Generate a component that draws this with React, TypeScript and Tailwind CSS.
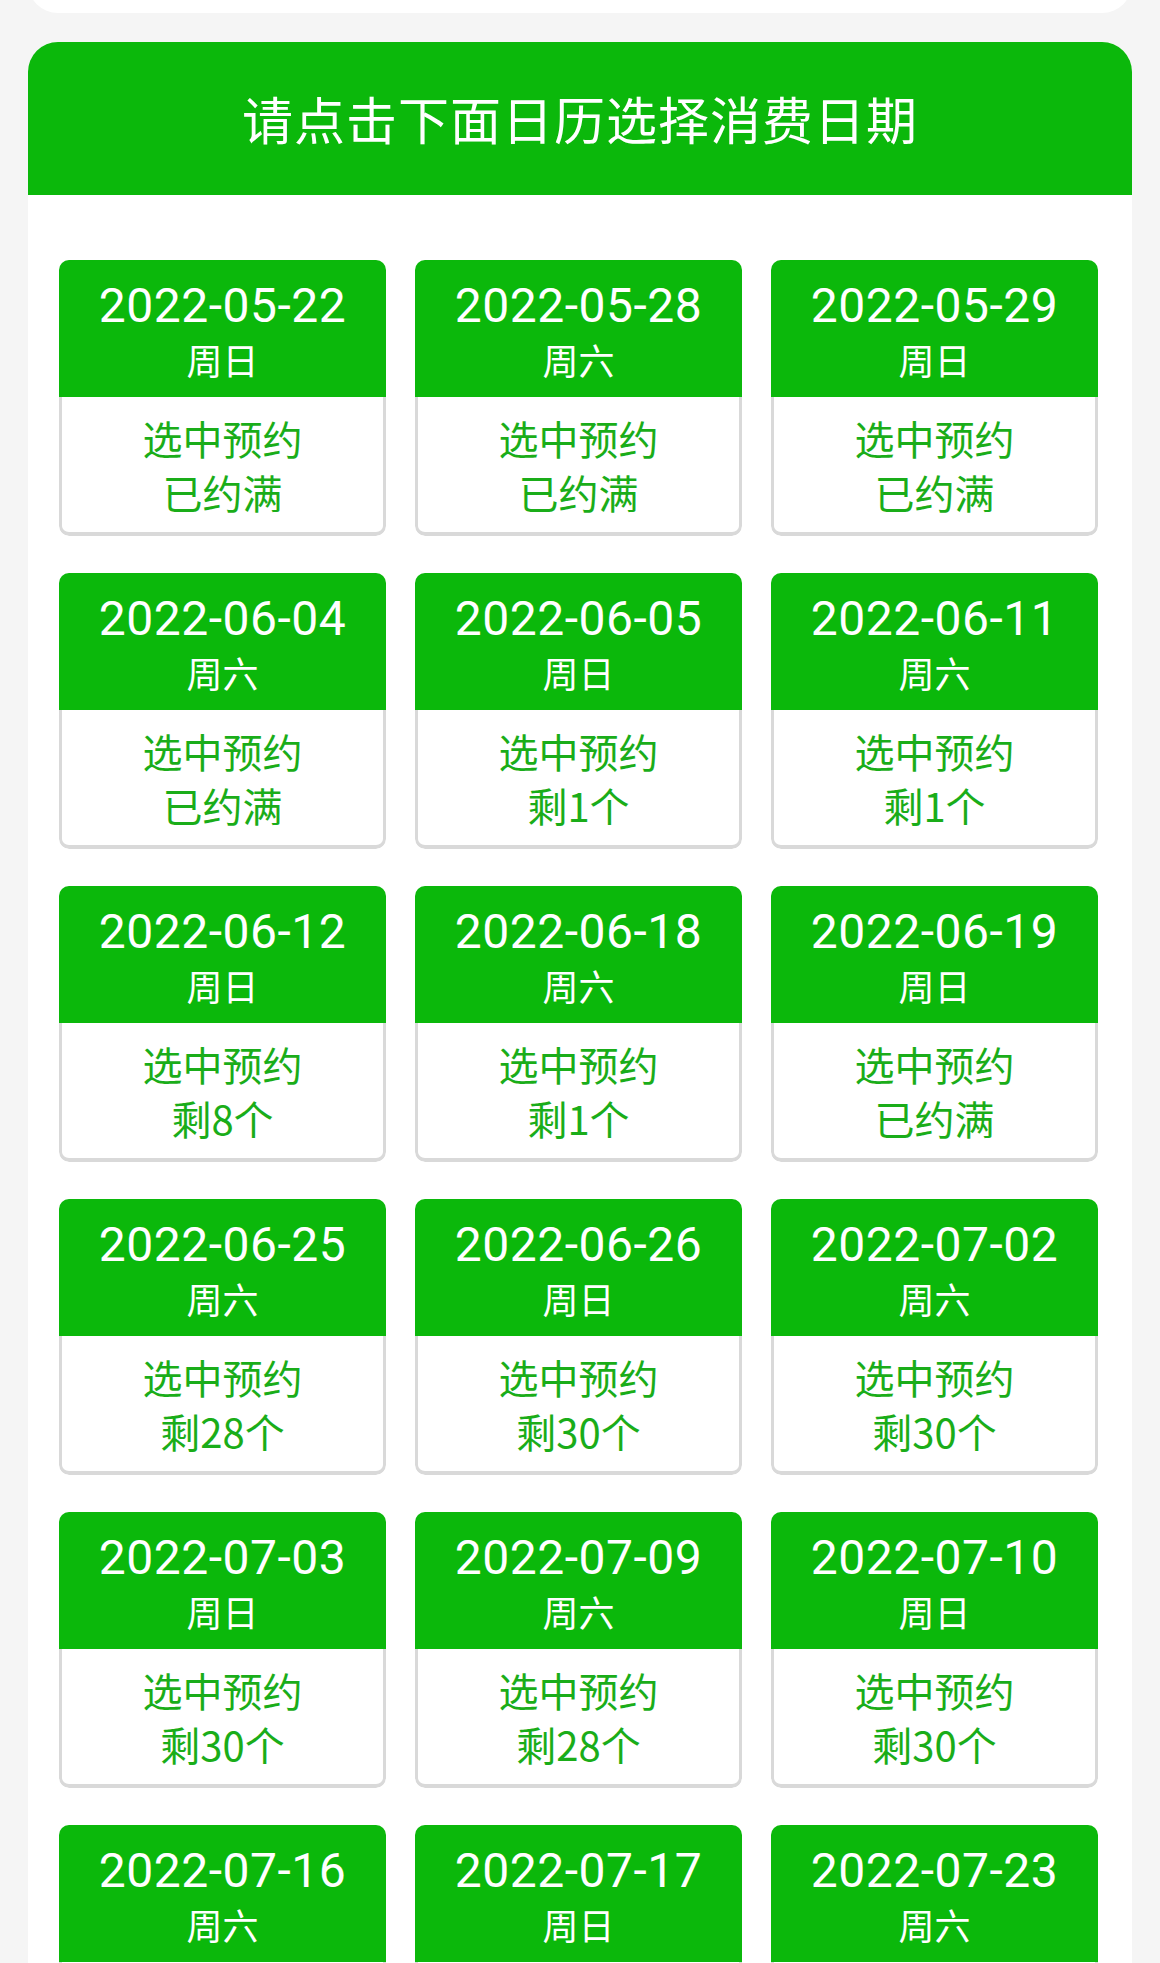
const DAYS = [
  { date: '2022-05-22', week: '周日', left: '已约满' },
  { date: '2022-05-28', week: '周六', left: '已约满' },
  { date: '2022-05-29', week: '周日', left: '已约满' },
  { date: '2022-06-04', week: '周六', left: '已约满' },
  { date: '2022-06-05', week: '周日', left: '剩1个' },
  { date: '2022-06-11', week: '周六', left: '剩1个' },
  { date: '2022-06-12', week: '周日', left: '剩8个' },
  { date: '2022-06-18', week: '周六', left: '剩1个' },
  { date: '2022-06-19', week: '周日', left: '已约满' },
  { date: '2022-06-25', week: '周六', left: '剩28个' },
  { date: '2022-06-26', week: '周日', left: '剩30个' },
  { date: '2022-07-02', week: '周六', left: '剩30个' },
  { date: '2022-07-03', week: '周日', left: '剩30个' },
  { date: '2022-07-09', week: '周六', left: '剩28个' },
  { date: '2022-07-10', week: '周日', left: '剩30个' },
  { date: '2022-07-16', week: '周六', left: '剩30个' },
  { date: '2022-07-17', week: '周日', left: '剩30个' },
  { date: '2022-07-23', week: '周六', left: '剩30个' },
]

function DayCard({ date, week, left }: { date: string; week: string; left: string }) {
  return (
    <div className="flex h-[276px] flex-col overflow-hidden rounded-[10px]">
      <div className="flex h-[137px] flex-col items-center bg-[#0bb80b] pt-[20px] text-white">
        <div className="font-['Roboto','Noto_Sans_CJK_SC',sans-serif] text-[48px] leading-[52px] tracking-[0.5px]">
          {date}
        </div>
        <div className="text-[36px] leading-[54px]">{week}</div>
      </div>
      <div className="flex h-[139px] flex-col items-center rounded-b-[10px] border-x-[3px] border-b-[4px] border-[#d9d9d9] bg-white pt-[14px] text-[40px] leading-[54px] text-[#1aad19]">
        <div>选中预约</div>
        <div>{left}</div>
      </div>
    </div>
  )
}

export default function App() {
  return (
    <div className="min-h-[1963px] overflow-hidden bg-[#f5f5f5] font-['Noto_Sans_CJK_SC','Noto_Sans',sans-serif]">
      {/* previous card, mostly scrolled off */}
      <div className="mx-[28px] -mt-[47px] h-[60px] rounded-b-[30px] bg-white" />

      <div className="mx-[28px] mt-[29px] min-h-[1921px] rounded-t-[30px] bg-white">
        <div className="flex h-[153px] items-center justify-center rounded-t-[30px] bg-[#0bb80b] text-[51px] tracking-[1px] text-white">
          请点击下面日历选择消费日期
        </div>

        <div className="grid grid-cols-[repeat(3,327px)] gap-x-[29px] gap-y-[37px] pl-[31px] pt-[65px]">
          {DAYS.map((d) => (
            <DayCard key={d.date} {...d} />
          ))}
        </div>
      </div>
    </div>
  )
}
